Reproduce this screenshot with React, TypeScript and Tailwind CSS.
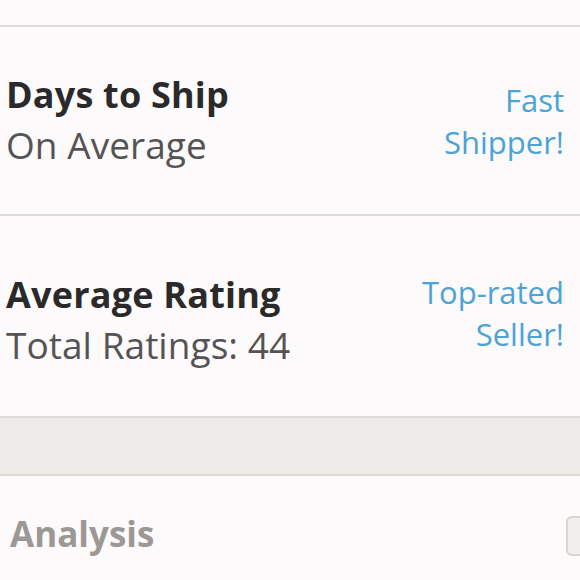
export default function App() {
  const stats = [
    { title: "Days to Ship", sub: "On Average", badge: ["Fast", "Shipper!"], h: "h-[187px]", l: "mt-[-2px]", r: "mt-[0px]" },
    { title: "Average Rating", sub: "Total Ratings: 44", badge: ["Top-rated", "Seller!"], h: "h-[202px]", l: "mt-[8px]", r: "mt-[-6px]" },
  ];

  return (
    <div className="w-[580px] h-[580px] overflow-hidden bg-[#fcfafb] font-['Open_Sans',sans-serif]">
      <div className="h-[25px]" />
      <div className="border-t-2 border-[#dddad7]">
        {stats.map((s, i) => (
          <div
            key={s.title}
            className={`flex items-center justify-between pl-[6px] pr-[16px] ${s.h} ${i > 0 ? "border-t-2 border-[#dcdcdc]" : ""}`}
          >
            <div className={s.l}>
              <div className="text-[36px] leading-[50px] font-bold text-[#2b2a2a] tracking-[0.2px]">{s.title}</div>
              <div className="text-[37px] leading-[50px] text-[#555353] tracking-[0.05px]">{s.sub}</div>
            </div>
            <div className={`text-right text-[31px] leading-[42px] text-[#4ca3d6] ${s.r}`}>
              {s.badge.map((b) => (
                <div key={b}>{b}</div>
              ))}
            </div>
          </div>
        ))}
      </div>

      {/* textured spacer band */}
      <div className="h-[60px] bg-[#eeebe8] border-y-2 border-[#dcd9d6]" />

      <div className="flex items-center justify-between pl-[10px] h-[112px]">
        <div className="text-[35px] leading-[40px] font-bold text-[#9b9895] mt-[4px]">Analysis</div>
        <div className="w-[30px] h-[40px] mr-[-16px] mt-[8px] rounded-[6px] border-2 border-[#d8d5d2] bg-[#f1efed]" />
      </div>
    </div>
  );
}
